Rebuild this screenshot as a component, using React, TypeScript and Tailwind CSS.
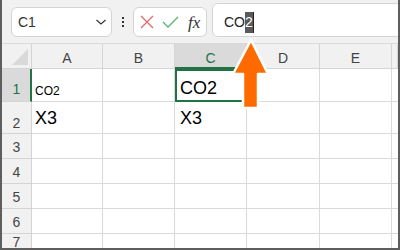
import React from "react";

const cols = ["A", "B", "C", "D", "E", ""];

function NameBox() {
  return (
    <div className="ml-[9px] flex h-[30px] w-[101px] items-center justify-between rounded-[6px] border border-[#d4d4d4] bg-white pl-[6px] pr-[4px]">
      <span className="text-[14px] text-[#333]">C1</span>
      <svg width="12" height="8" viewBox="0 0 12 8">
        <path d="M1.5 2 L6 6 L10.5 2" fill="none" stroke="#333" strokeWidth="1.2" />
      </svg>
    </div>
  );
}

function FxBox() {
  return (
    <div className="flex h-[30px] w-[74px] items-center rounded-[6px] border border-[#d4d4d4] bg-white pl-[6px]">
      {/* cancel */}
      <svg width="14" height="14" viewBox="0 0 14 14">
        <path d="M1 1 L13 13 M13 1 L1 13" stroke="#e06a6a" strokeWidth="1.3" />
      </svg>
      {/* enter */}
      <svg className="ml-[8px]" width="17" height="12" viewBox="0 0 17 12">
        <path d="M1 6 L6 11 L16 1" fill="none" stroke="#5cb377" strokeWidth="1.3" />
      </svg>
      <span className="ml-[9px] font-['Liberation_Serif',serif] text-[17px] italic leading-none text-[#333]">
        fx
      </span>
    </div>
  );
}

export default function App() {
  return (
    <div className="relative h-[250px] w-[400px] overflow-hidden border-x-2 border-b-2 border-[#5e5e5e] bg-[#f1f1f1] font-['Liberation_Sans',Arial,sans-serif]">
      {/* FORMULA BAR */}
      <div className="flex h-[37px] items-end">
        <NameBox />
        <div className="flex w-[21px] flex-col items-center gap-[2px] pb-[10px]">
          <span className="h-[2px] w-[2px] bg-[#333]" />
          <span className="h-[2px] w-[2px] bg-[#333]" />
          <span className="h-[2px] w-[2px] bg-[#333]" />
        </div>
        <FxBox />
        <div className="ml-[5px] -mr-[2px] flex h-[34px] flex-1 items-start rounded-l-[6px] border border-[#d4d4d4] bg-white pl-[11px] pt-[8px]">
          <span className="text-[14px] leading-[21px] text-[#222]">CO</span>
          <span className="bg-[#595959] text-[14px] leading-[21px] text-white">2</span>
          <span className="h-[21px] w-px bg-[#222]" />
        </div>
      </div>

      {/* SHEET */}
      <div className="mt-[6px] grid grid-cols-[30px_71px_72px_72px_73px_72px_1fr] grid-rows-[25px_33px_32px_25px_25px_25px_25px_1fr] border-t border-[#dadada] bg-white">
        {/* header row */}
        <div className="flex items-end justify-end border-b border-r border-[#d4d4d4] bg-[#f1f1f1] pb-[3px] pr-[3px]">
          <svg width="16" height="16" viewBox="0 0 16 16">
            <path d="M16 0 L16 16 L0 16 Z" fill="#d9d9d9" />
          </svg>
        </div>
        {cols.map((c) =>
          c === "C" ? (
            <div
              key={c}
              className="flex items-end justify-center border-b-2 border-r border-b-[#217346] border-r-[#d4d4d4] bg-[#dadada] pb-[2px] text-[14px] leading-none text-[#217346]"
            >
              {c}
            </div>
          ) : (
            <div
              key={c || "f"}
              className="flex items-end justify-center border-b border-r border-[#d4d4d4] bg-[#f1f1f1] pb-[3px] text-[14px] leading-none text-[#444]"
            >
              {c}
            </div>
          )
        )}

        {/* row 1 */}
        <div className="flex items-end justify-center border-b border-r-2 border-b-[#d4d4d4] border-r-[#217346] bg-[#dadada] pb-[5px] pl-[1px] text-[14px] leading-none text-[#217346]">
          1
        </div>
        <div className="flex items-end border-b border-r border-[#dadada] pb-[4px] pl-[3px] text-[12px] leading-none text-black">
          CO2
        </div>
        <div className="border-b border-r border-[#dadada]" />
        <div className="flex items-end border-2 border-[#217346] pb-[3px] pl-[3px] text-[18px] leading-none text-black">
          CO2
        </div>
        <div className="border-b border-r border-[#dadada]" />
        <div className="border-b border-r border-[#dadada]" />
        <div className="border-b border-[#dadada]" />

        {/* row 2 */}
        <div className="flex items-end justify-center border-b border-r border-[#d4d4d4] bg-[#f1f1f1] pb-[3px] text-[14px] leading-none text-[#444]">
          2
        </div>
        <div className="flex items-end border-b border-r border-[#dadada] pb-[6px] pl-[3px] text-[18px] leading-none text-black">
          X3
        </div>
        <div className="border-b border-r border-[#dadada]" />
        <div className="flex items-end border-b border-r border-[#dadada] pb-[6px] pl-[5px] text-[18px] leading-none text-black">
          X3
        </div>
        <div className="border-b border-r border-[#dadada]" />
        <div className="border-b border-r border-[#dadada]" />
        <div className="border-b border-[#dadada]" />

        {/* empty rows */}
        {[3, 4, 5, 6, 7].map((r) => (
          <React.Fragment key={r}>
            <div className="flex items-center justify-center border-b border-r border-[#d4d4d4] bg-[#f1f1f1] pt-[1px] text-[14px] leading-none text-[#444]">
              {r}
            </div>
            <div className="border-b border-r border-[#dadada]" />
            <div className="border-b border-r border-[#dadada]" />
            <div className="border-b border-r border-[#dadada]" />
            <div className="border-b border-r border-[#dadada]" />
            <div className="border-b border-r border-[#dadada]" />
            <div className="border-b border-[#dadada]" />
          </React.Fragment>
        ))}
      </div>

      {/* ARROW */}
      <svg
        className="absolute left-[230px] top-[38px] overflow-visible"
        width="40"
        height="72"
        viewBox="0 0 40 72"
      >
        <path
          d="M19 2 L36 36 L26 36 L26 70 L11 70 L11 36 L1 36 Z"
          fill="#ff6a00"
          stroke="#fff"
          strokeWidth="2.5"
          strokeLinejoin="round"
        />
      </svg>
    </div>
  );
}
